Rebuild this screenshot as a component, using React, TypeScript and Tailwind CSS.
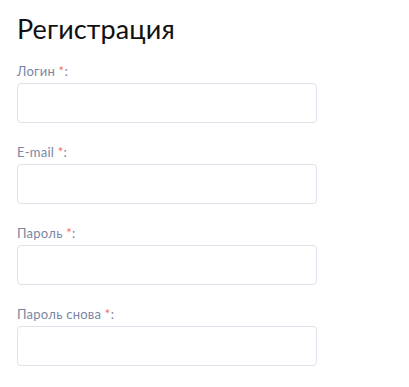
import React from "react";

const fields = ["Логин", "E-mail", "Пароль", "Пароль снова"];

export default function App() {
  return (
    <div className="min-h-[387px] w-[409px] bg-white pl-[17px] pt-[13px]" style={{ fontFamily: "Lato, 'Noto Sans', sans-serif" }}>
      <h1 className="text-[27px] leading-[32px] tracking-[0.1px] font-normal text-[#111111]">Регистрация</h1>
      <div className="mt-[18px] flex flex-col gap-[21px]">
        {fields.map((f) => (
          <div key={f} className="flex flex-col">
            <label className="text-[13px] leading-[16px] tracking-[0.25px] text-[#7a86a1] mb-[4px]">
              {f} <span className="text-[#f26b6b]">*</span>:
            </label>
            <input type="text" className="w-[300px] h-[40px] rounded-[4px] border border-[#dfe2ea] bg-white outline-none" />
          </div>
        ))}
      </div>
    </div>
  );
}
